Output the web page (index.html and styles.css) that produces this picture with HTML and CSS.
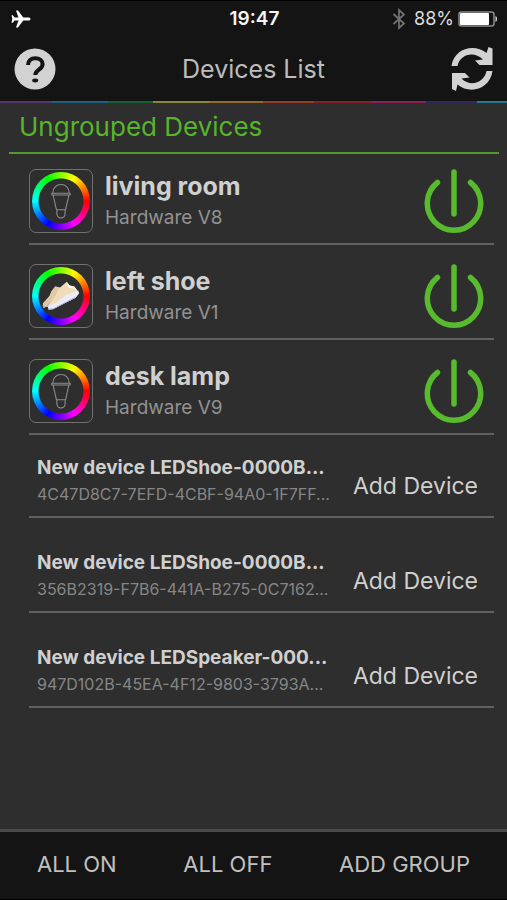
FILE: index.html
```html
<!DOCTYPE html>
<html lang="en">
<head>
<meta charset="utf-8">
<meta name="viewport" content="width=device-width, initial-scale=1">
<title>Devices List</title>
<link rel="stylesheet" href="styles.css">
</head>
<body>
<svg class="defs" width="0" height="0" aria-hidden="true">
  <symbol id="bulb" viewBox="0 0 24 40">
    <path d="M3 11.500C3 5.500 7 2 12 2s9 3.500 9 9.500M2 11.500h20v2H2zM3.500 14l3.500 15.500h10l3.500-15.500M7.500 29.500v4.500c0 2.500 2 4.500 4.500 4.500s4.500-2 4.500-4.500v-4.500" fill="none" stroke="currentColor" stroke-width="1.200" stroke-linejoin="round"/>
  </symbol>
  <symbol id="power" viewBox="0 0 60 66">
    <path d="M13.500 13.500a26.700 26.700 0 1 0 33 0M30 3v42" fill="none" stroke="currentColor" stroke-width="5.500" stroke-linecap="round"/>
  </symbol>
</svg>
<header class="top">
  <div class="status">
    <svg class="plane" viewBox="0 0 20 18" aria-hidden="true"><path d="M19.500 9c0-1-1-1.500-2.200-1.500h-5L7 .5H5l2.500 7H3.600L1.800 5.200H.5L1.300 9 .5 12.800h1.300l1.800-2.300h3.900l-2.500 7h2l5.300-7h5c1.200 0 2.200-.5 2.200-1.500z" fill="#fff"/></svg>
    <span class="clock">19:47</span>
    <span class="power-info">
      <svg class="bluetooth" viewBox="0 0 14 22" aria-hidden="true"><path d="M1.500 6l10.500 9.500-5 4.500V2l5 4.500L1.500 16" fill="none" stroke="#737373" stroke-width="1.700"/></svg>
      <span>88%</span>
      <svg class="battery" viewBox="0 0 40 16" aria-hidden="true"><rect x="1" y="1" width="35" height="14" rx="2.500" fill="none" stroke="#8c8c8c" stroke-width="1.500"/><rect x="2" y="2" width="29" height="12" rx="1" fill="#fff"/><path d="M37.500 5c2 .5 2 5.500 0 6z" fill="#ddd"/></svg>
    </span>
  </div>
  <div class="nav">
    <button class="icon-button" aria-label="Help"><svg viewBox="0 0 42 46"><circle cx="21" cy="23" r="20.500" fill="#d2d2d2"/><path d="M14 19c0-4.500 3-6.800 7.300-6.800 4.200 0 7.300 2.200 7.300 6 0 5.500-7.300 5.500-7.300 10.800" fill="none" stroke="#141414" stroke-width="4"/><ellipse cx="21.200" cy="34.500" rx="3" ry="1.900" fill="#141414"/></svg></button>
    <h1>Devices List</h1>
    <button class="icon-button" aria-label="Refresh"><svg viewBox="0 0 42 46"><path d="M.5 20C3 2.500 23 -3 35.500 7L37.500 1l4 1.500v16.500H28.500L24 14.500l8-1C22 4 8.500 9.500 6.500 20z" fill="#d2d2d2"/><path d="M41.500 25C39 43 19 49 6.500 38.500L5 45 1 43V27H14L18.500 31.500l-8 1C20 42 33.500 36 35.500 25z" fill="#d2d2d2"/></svg></button>
  </div>
  <div class="rainbow"></div>
</header>
<main>
  <h2>Ungrouped Devices</h2>
  <ul class="devices">
    <li>
      <span class="tile"><span class="wheel"><svg class="bulb"><use href="#bulb"/></svg></span></span>
      <div class="info"><h3>living room</h3><p>Hardware V8</p></div>
      <button class="power" aria-label="Toggle living room"><svg><use href="#power"/></svg></button>
    </li>
    <li>
      <span class="tile"><span class="wheel"><svg class="shoe" viewBox="0 0 40 32"><path d="M1 24l7-8 2-5 4-5 5 1 7-6 3 4 5 1 5 7-3 4-25 13-4-3-6 1z" fill="#efdcba"/><path d="M1 24l7-8 2-5 4-5 4 1-4 9-8 11-5 1z" fill="#dfc9a4"/><path d="M26 1l3 4 5 1 3 4-9-3z" fill="#fffaf0"/><path d="M6 27l9-4 10-8 8-3 5-2 1 3-4 5-24 12-4 .5z" fill="#ececf6"/><path d="M1 25.500l1 2.500 4-2 2-3M7 30l5-.5 23-12" fill="none" stroke="#a3addf"/></svg></span></span>
      <div class="info"><h3>left shoe</h3><p>Hardware V1</p></div>
      <button class="power" aria-label="Toggle left shoe"><svg><use href="#power"/></svg></button>
    </li>
    <li>
      <span class="tile"><span class="wheel"><svg class="bulb"><use href="#bulb"/></svg></span></span>
      <div class="info"><h3>desk lamp</h3><p>Hardware V9</p></div>
      <button class="power" aria-label="Toggle desk lamp"><svg><use href="#power"/></svg></button>
    </li>
  </ul>
  <ul class="found">
    <li><div class="info"><h3>New device LEDShoe-0000B...</h3><p>4C47D8C7-7EFD-4CBF-94A0-1F7FF...</p></div><button class="add">Add Device</button></li>
    <li><div class="info"><h3>New device LEDShoe-0000B...</h3><p>356B2319-F7B6-441A-B275-0C7162...</p></div><button class="add">Add Device</button></li>
    <li><div class="info"><h3>New device LEDSpeaker-000...</h3><p>947D102B-45EA-4F12-9803-3793A...</p></div><button class="add">Add Device</button></li>
  </ul>
</main>
<footer>
  <button>ALL ON</button>
  <button>ALL OFF</button>
  <button>ADD GROUP</button>
</footer>
</body>
</html>
```
FILE: styles.css
```css
* { box-sizing: border-box; }
body {
  margin: 0;
  min-height: 100vh;
  display: flex;
  flex-direction: column;
  background: #2e2e2e;
  color: #d0d0d0;
  font-family: Inter, "Liberation Sans", sans-serif;
}
h1, h2, h3, p, ul { margin: 0; padding: 0; font-weight: 400; }
ul { list-style: none; }
svg { display: block; }
button {
  padding: 0;
  border: 0;
  background: none;
  color: inherit;
  font: inherit;
  cursor: pointer;
}
.defs { position: absolute; }

.top { background: #141414; border-top: 1px solid #000; }
.status {
  display: grid;
  grid-template-columns: 1fr auto 1fr;
  align-items: center;
  height: 35px;
  padding: 0 9px 0 11px;
  color: #f4f4f4;
  font-size: 18px;
}
.plane { width: 20px; height: 18px; }
.clock { font-size: 19px; font-weight: 600; }
.power-info {
  display: flex;
  align-items: center;
  justify-content: flex-end;
  gap: 4px;
  color: #dcdcdc;
}
.bluetooth { width: 14px; height: 22px; margin-right: 4px; }
.battery { width: 40px; height: 16px; }
.nav {
  display: flex;
  align-items: center;
  justify-content: space-between;
  height: 65px;
  padding: 0 14px;
}
.icon-button svg { width: 42px; height: 46px; }
h1 { font-size: 25px; line-height: 32px; color: #bcbcbc; }
.rainbow {
  height: 2px;
  background: linear-gradient(90deg,
    #56356a 0 10.3%, #1f5f80 0 21.3%, #176033 0 30.2%, #8c8436 0 41.4%,
    #96682c 0 51.9%, #963a2a 0 62%, #84202a 0 73.4%, #8c2058 0 84%,
    #33265e 0 94.1%, #267890 0);
}

main { flex: 1; }
h2 {
  margin: 0 8px 0 9px;
  padding: 8px 10px 9px;
  border-bottom: 2px solid #4e9a2f;
  color: #57b52c;
  font-size: 26px;
  line-height: 32px;
}
.devices, .found { display: grid; margin: 0 13px 0 29px; }
.devices { gap: 4px; }
.found { gap: 12px; }
li { display: flex; border-bottom: 2px solid #606060; }
.devices li { height: 91px; padding: 15px 10px 0 0; }
.info { flex: 1; min-width: 0; white-space: nowrap; }
.tile {
  display: grid;
  place-items: center;
  width: 64px;
  height: 64px;
  border: 1px solid #707070;
  border-radius: 7px;
}
.wheel {
  display: grid;
  place-items: center;
  width: 58px;
  height: 58px;
  border-radius: 50%;
  background:
    radial-gradient(circle, #2e2e2e 22px, transparent 23px),
    conic-gradient(from 90deg, #f00, #f0f 16.6%, #00f 33.3%, #0ff 50%, #0f0 66.6%, #ff0 83.3%, #f00);
}
.bulb { width: 22px; height: 38px; color: #8d8d8d; }
.shoe { width: 38px; height: 32px; }
.devices .info { padding: 1px 0 0 12px; }
.devices h3 { font-size: 25px; line-height: 32px; font-weight: 700; }
.devices p { font-size: 19px; line-height: 32px; color: #929292; }
.power svg { width: 60px; height: 66px; color: #58bb2d; }
.power { align-self: flex-start; }

.found li { height: 83px; padding: 20px 16px 0 8px; }
.found h3 { font-size: 19px; line-height: 26px; font-weight: 700; }
.found p { font-size: 16px; line-height: 26px; color: #868686; }
.add { align-self: flex-start; padding-top: 15px; font-size: 23px; line-height: 32px; }

footer {
  display: flex;
  justify-content: space-between;
  height: 71px;
  padding: 0 37px 3px;
  border-top: 3px solid #4b4b4b;
  border-bottom: 1px solid #000;
  background: #141414;
  color: #c0c0c0;
  font-size: 22px;
}
```
